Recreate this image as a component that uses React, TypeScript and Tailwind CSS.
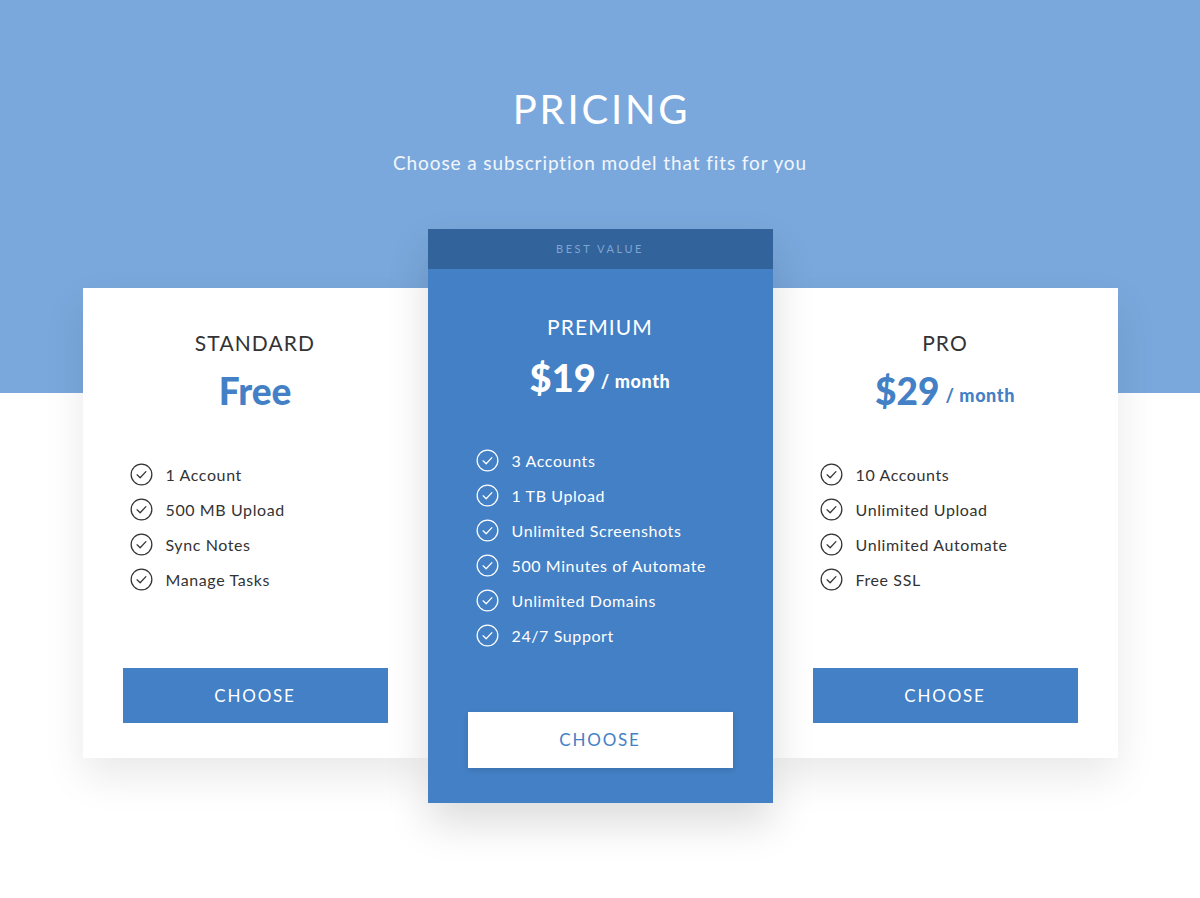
import React from "react"

const font = { fontFamily: '"Lato", "Open Sans", sans-serif' }

function CheckIcon({ light }: { light?: boolean }) {
  const c = light ? "#ffffff" : "#333333"
  return (
    <svg width="23" height="23" viewBox="0 0 24 24" fill="none" aria-hidden="true">
      <circle cx="12" cy="12" r="10.8" stroke={c} strokeWidth="1.3" />
      <path d="M7.4 12.3l3.2 3.1 6-6.4" stroke={c} strokeWidth="1.3" strokeLinecap="round" strokeLinejoin="round" />
    </svg>
  )
}

function Features({ items, light }: { items: string[]; light?: boolean }) {
  return (
    <ul className="flex flex-col">
      {items.map((f) => (
        <li key={f} className="h-[35px] flex items-center gap-[13px]">
          <CheckIcon light={light} />
          <span
            className={`text-[16px] tracking-[0.6px] ${light ? "text-white" : "text-[#333333]"}`}
          >
            {f}
          </span>
        </li>
      ))}
    </ul>
  )
}

function SideCard({
  name,
  price,
  unit,
  items,
}: {
  name: string
  price: string
  unit?: string
  items: string[]
}) {
  return (
    <div className="mt-[59px] w-[345px] h-[470px] bg-white shadow-[0_18px_40px_rgba(0,0,0,0.09)] flex flex-col pt-[43px] pb-[35px]">
      <h3 className="text-center text-[21px] leading-[24px] tracking-[1.1px] text-[#333333]">{name}</h3>
      <div className="mt-[16px] h-[40px] flex items-center justify-center text-[#4380c5] font-black">
        <span className="text-[37px] leading-[40px]">{price}</span>
        {unit && <span className="ml-[6px] mt-[8px] text-[18px] tracking-[0.6px]">/ month</span>}
      </div>
      <div className="mt-[46px] pl-[47px]">
        <Features items={items} />
      </div>
      <button className="mt-auto mx-[40px] h-[55px] bg-[#4380c5] text-white text-[17px] tracking-[1.8px]">
        CHOOSE
      </button>
    </div>
  )
}

export default function App() {
  return (
    <div
      style={font}
      className="min-h-[898px] w-full bg-[linear-gradient(to_bottom,#7aa8dc_0px,#7aa8dc_393px,#ffffff_393px)] flex flex-col items-center pt-[85px]"
    >
      <h1 className="text-white text-[40px] leading-[48px] tracking-[2.8px] pl-[3px]">PRICING</h1>
      <p className="mt-[18px] text-[19px] leading-[24px] tracking-[0.9px] text-white/90">
        Choose a subscription model that fits for you
      </p>

      <div className="mt-[54px] flex items-start">
        <SideCard
          name="STANDARD"
          price="Free"
          items={["1 Account", "500 MB Upload", "Sync Notes", "Manage Tasks"]}
        />

        <div className="relative z-10 w-[345px] h-[574px] bg-[#4380c5] shadow-[0_20px_40px_rgba(0,0,0,0.14)] flex flex-col pb-[35px]">
          <div className="h-[40px] bg-[#32639a] flex items-center justify-center text-[11px] tracking-[2.6px] text-[#7fa5d4]">
            BEST VALUE
          </div>
          <h3 className="mt-[46px] text-center text-[21px] leading-[24px] tracking-[1.1px] text-white">PREMIUM</h3>
          <div className="mt-[16px] h-[44px] flex items-center justify-center text-white font-black">
            <span className="text-[38px] leading-[44px]">$19</span>
            <span className="ml-[5px] mt-[8px] text-[18px] tracking-[0.6px]">/ month</span>
          </div>
          <div className="mt-[44px] pl-[48px]">
            <Features
              light
              items={[
                "3 Accounts",
                "1 TB Upload",
                "Unlimited Screenshots",
                "500 Minutes of Automate",
                "Unlimited Domains",
                "24/7 Support",
              ]}
            />
          </div>
          <button className="mt-auto mx-[40px] h-[56px] bg-white text-[#4380c5] text-[17px] tracking-[1.8px] shadow-[0_2px_6px_rgba(0,0,0,0.12)]">
            CHOOSE
          </button>
        </div>

        <SideCard
          name="PRO"
          price="$29"
          unit="/ month"
          items={["10 Accounts", "Unlimited Upload", "Unlimited Automate", "Free SSL"]}
        />
      </div>
    </div>
  )
}
